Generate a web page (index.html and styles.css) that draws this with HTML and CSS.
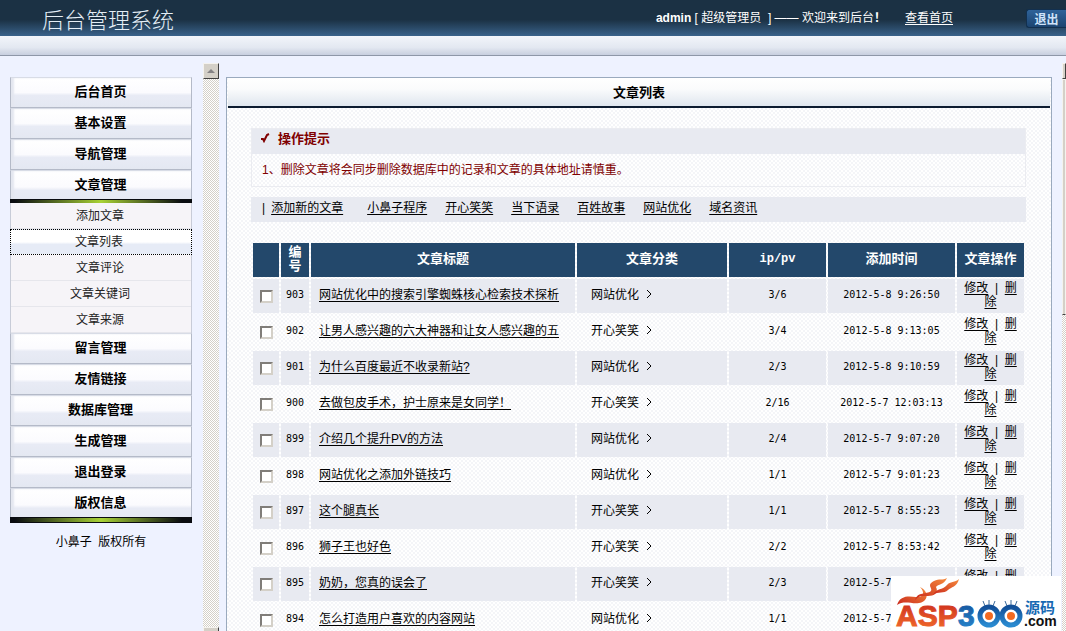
FILE: index.html
```html
<!DOCTYPE html>
<html lang="zh-CN">
<head>
    <meta charset="UTF-8">
    <meta name="viewport" content="width=device-width, initial-scale=1.0">
    <title>后台管理系统</title>
    <link rel="stylesheet" href="styles.css">
</head>
<body>
    <div class="header">
        <h1>后台管理系统</h1>
        <div class="welcome"><b>admin</b> [ 超级管理员 &nbsp;] —— 欢迎来到后台<b>！</b></div>
        <a class="home-link" href="#">查看首页</a>
        <button class="logout-btn" type="button">退出</button>
    </div>
    <div class="subheader"></div>

    <div class="main">
        <div class="sidebar">
            <ul class="menu">
                <li><a href="#">后台首页</a></li>
                <li><a href="#">基本设置</a></li>
                <li><a href="#">导航管理</a></li>
                <li class="open"><a href="#">文章管理</a></li>
            </ul>
            <ul class="submenu">
                <li><a href="#">添加文章</a></li>
                <li><a class="current" href="#">文章列表</a></li>
                <li><a href="#">文章评论</a></li>
                <li><a href="#">文章关键词</a></li>
                <li><a href="#">文章来源</a></li>
            </ul>
            <ul class="menu">
                <li><a href="#">留言管理</a></li>
                <li><a href="#">友情链接</a></li>
                <li><a href="#">数据库管理</a></li>
                <li><a href="#">生成管理</a></li>
                <li><a href="#">退出登录</a></li>
                <li class="open last"><a href="#">版权信息</a></li>
            </ul>
            <p class="copyright">小鼻子 &nbsp;版权所有</p>
        </div>

        <div class="scrollbar">
            <div class="scroll-btn"><svg width="8" height="4" viewBox="0 0 8 4"><path d="M0 4L4 0L8 4Z" fill="#848284"/></svg></div>
            <div class="scroll-btn"></div>
        </div>

        <div class="content">
            <div class="panel">
                <h2>文章列表</h2>
                <div class="panel-body">
                    <div class="tips">
                        <h3><svg width="10" height="10" viewBox="0 0 10 10"><path d="M1 6H3L4 8L7 2L9 1" fill="none" stroke="#800000" stroke-width="2"/></svg>操作提示</h3>
                        <p>1、删除文章将会同步删除数据库中的记录和文章的具体地址请慎重。</p>
                    </div>
                    <div class="links">
                        <span>|</span>
                        <a class="add-link" href="#">添加新的文章</a>
                        <a href="#">小鼻子程序</a>
                        <a href="#">开心笑笑</a>
                        <a href="#">当下语录</a>
                        <a href="#">百姓故事</a>
                        <a href="#">网站优化</a>
                        <a href="#">域名资讯</a>
                    </div>
                    <table>
                        <thead>
                            <tr>
                                <th class="col-check"></th>
                                <th class="col-id">编号</th>
                                <th class="col-title">文章标题</th>
                                <th class="col-type">文章分类</th>
                                <th class="col-ip">ip/pv</th>
                                <th class="col-time">添加时间</th>
                                <th class="col-action">文章操作</th>
                            </tr>
                        </thead>
                        <tbody id="articles"></tbody>
                    </table>
                </div>
            </div>
        </div>

        <div class="scrollbar page-scroll">
            <div class="scroll-btn"></div>
            <div class="scroll-thumb"></div>
        </div>
    </div>

    <div class="watermark">
        <svg width="170" height="55" viewBox="0 0 170 55">
            <defs>
                <linearGradient id="fire" x1="0" y1="1" x2="1" y2="0">
                    <stop offset="0" stop-color="#c9281c"/>
                    <stop offset="1" stop-color="#f58a3c"/>
                </linearGradient>
                <linearGradient id="asp" x1="0" y1="0" x2="0" y2="1">
                    <stop offset="0" stop-color="#c9281c"/>
                    <stop offset="1" stop-color="#f4702c"/>
                </linearGradient>
                <linearGradient id="blue" x1="0" y1="0" x2="0" y2="1">
                    <stop offset="0" stop-color="#124f98"/>
                    <stop offset="1" stop-color="#2a8ad0"/>
                </linearGradient>
            </defs>
            <path d="M6 29C9 19 18 20 25 21C33 22 34 16 29 11C39 16 37 26 28 27C20 28 13 24 6 29Z" fill="url(#fire)"/>
            <path d="M24 24C27 15 35 19 40 15C42 12 35 9 43 5C48 2 52 5 56 2C53 9 47 8 45 11C48 17 43 20 37 20C32 20 28 19 24 24Z" fill="url(#fire)"/>
            <path d="M42 19C46 11 51 15 56 9C59 5 64 7 68 3C66 11 60 11 57 14C53 18 47 15 42 19Z" fill="url(#fire)"/>
            <text class="logo-asp" x="5" y="50">ASP</text>
            <text class="logo-num" x="67" y="50">3</text>
            <g fill="#fff" stroke="url(#blue)" stroke-width="5">
                <ellipse cx="98" cy="40" rx="9" ry="9"/>
                <ellipse cx="120" cy="40" rx="9" ry="9"/>
            </g>
            <g fill="#f26a21">
                <circle cx="98" cy="40" r="4"/>
                <circle cx="120" cy="40" r="4"/>
            </g>
            <path d="M94 30L92 25M98 29V24M102 30L104 25M116 30L114 25M120 29V24M124 30L126 25" stroke="#3a6a9c" stroke-width="1"/>
            <text class="logo-cn" x="134" y="37">源码</text>
            <text class="logo-com" x="133" y="50">.com</text>
        </svg>
    </div>

    <script src="script.js"></script>
</body>
</html>
```
FILE: styles.css
```css
* {
    box-sizing: border-box;
}

body {
    margin: 0;
    height: 100vh;
    display: flex;
    flex-direction: column;
    overflow: hidden;
    background-color: #eef2ff;
    font-family: "Liberation Sans", "Noto Sans CJK SC", sans-serif;
    font-size: 12px;
    line-height: 14px;
    color: #000;
}

h1, h2, h3, p, ul {
    margin: 0;
    padding: 0;
}

ul {
    list-style: none;
}

a {
    color: #000;
    text-underline-offset: 2px;
}

.header {
    flex: none;
    display: flex;
    align-items: center;
    height: 36px;
    padding-left: 42px;
    background: linear-gradient(#1b3144 0%, #1b3144 55%, #39628a 100%);
    color: #fff;
}

.header h1 {
    flex: 1;
    padding-top: 6px;
    font-size: 22px;
    line-height: 30px;
    font-weight: 300;
    color: #e4eef6;
}

.home-link {
    margin: 0 73px 0 19px;
    color: #fff;
}

.logout-btn {
    width: 40px;
    height: 19px;
    padding: 0;
    border: 1px solid #12304f;
    border-right: none;
    border-radius: 3px 0 0 3px;
    background: linear-gradient(#2f639a, #1c4470);
    color: #cfe3fa;
    font: bold 12px "Liberation Sans", "Noto Sans CJK SC", sans-serif;
}

.subheader {
    flex: none;
    height: 20px;
    background: linear-gradient(#f2f5fa, #e3e8f1 60%, #c8cfdf);
    border-bottom: 1px solid #8e97a8;
}

.main {
    flex: 1;
    min-height: 0;
    display: flex;
    padding-top: 7px;
}

.sidebar {
    flex: none;
    width: 203px;
    padding: 14px 11px 0 10px;
}

.menu li {
    height: 31px;
    border: 1px solid #b4bac8;
    border-top-color: #d8dce6;
    background: linear-gradient(#fff 0%, #fbfbfe 50%, #e8ebf5 60%, #e4e8f2 100%);
    box-shadow: inset 3px 0 2px #e4e7f0;
}

.menu a {
    display: block;
    line-height: 28px;
    padding-right: 1px;
    font-size: 13px;
    font-weight: bold;
    text-align: center;
    text-decoration: none;
}

.menu .open {
    height: 33px;
    border-bottom: none;
}

.open::after {
    content: "";
    display: block;
    height: 4px;
    margin: 0 -1px;
    border: 1px solid #0a0c10;
    background: linear-gradient(90deg, #0a0c10 2%, #a8d236 50%, #0a0c10 95%);
}

.submenu {
    border: 1px solid #c8ccd8;
    border-width: 0 1px;
    background-color: #f6f4f8;
}

.submenu li {
    height: 26px;
    border-bottom: 1px solid #e6e6ec;
}

.submenu a {
    display: block;
    padding-right: 2px;
    line-height: 26px;
    text-align: center;
    text-decoration: none;
    color: #222;
}

.submenu .current {
    margin: 0 -1px;
    padding-right: 4px;
    border: 1px dotted #000;
    background: linear-gradient(#fff 50%, #e6ebf6 60%);
    line-height: 24px;
}

.copyright {
    margin-top: 14px;
    text-align: center;
}

.scrollbar {
    flex: none;
    display: flex;
    flex-direction: column;
    justify-content: space-between;
    width: 16px;
    background: repeating-conic-gradient(#fff 0% 25%, #d4d0c8 0% 50%) 0 0 / 2px 2px;
}

.scroll-btn {
    display: flex;
    align-items: center;
    justify-content: center;
    height: 16px;
    border: 1px solid #f4f2ee;
    border-right-color: #404040;
    border-bottom-color: #404040;
    background-color: #d4d0c8;
}

.scrollbar:not(.page-scroll) .scroll-btn:last-child {
    margin-bottom: -12px;
}

.content {
    flex: 1;
    min-width: 0;
    padding: 14px 10px 0 7px;
}

.panel {
    min-height: 100%;
    padding: 0 1px;
    border: 1px solid #9aaabe;
    background: repeating-conic-gradient(#fff 0% 25%, #f4f5f8 0% 50%) 0 0 / 4px 4px;
}

.panel h2 {
    height: 30px;
    border-bottom: 2px solid #0c1c30;
    background: linear-gradient(#fff 0%, #fafbfc 40%, #dfe6ee 100%);
    font-size: 13px;
    line-height: 29px;
    text-align: center;
}

.panel-body {
    padding: 20px 24px 0 23px;
}

.tips {
    height: 59px;
    border: 1px solid #ebecf1;
    color: #800000;
}

.tips h3 {
    height: 25px;
    padding-left: 8px;
    background-color: #e8eaf1;
    font-size: 13px;
    line-height: 20px;
}

.tips svg {
    margin-right: 8px;
}

.tips p {
    padding-left: 10px;
    line-height: 32px;
}

.links {
    display: flex;
    align-items: center;
    gap: 18px;
    height: 25px;
    margin-top: 10px;
    padding: 0 11px 4px;
    background-color: #e8eaf1;
}

.links span {
    margin-right: -12px;
}

.links .add-link {
    margin-right: 6px;
}

table {
    width: 100%;
    margin-top: 19px;
    border-spacing: 2px;
    table-layout: fixed;
}

th, td {
    height: 34px;
    padding: 0 0 2px;
    text-align: center;
}

th {
    background-color: #23486b;
    color: #fff;
    font-size: 13px;
}

tr:nth-child(odd) td {
    background-color: #e8eaf1;
}

.col-check {
    width: 26px;
}

.col-id {
    width: 28px;
    padding: 0 6px 2px;
}

.col-type {
    width: 150px;
}

.col-ip {
    width: 97px;
    font-family: "Liberation Mono", monospace;
    font-size: 12px;
}

.col-time {
    width: 127px;
}

.col-action {
    width: 67px;
}

td input {
    display: block;
    appearance: none;
    width: 13px;
    height: 13px;
    margin: 3px 0 0 7px;
    border: 2px inset #d4d0c8;
    background-color: #fff;
}

td.title {
    padding-left: 8px;
    text-align: left;
}

td.type {
    padding-left: 14px;
    text-align: left;
}

.type svg {
    margin-left: 7px;
}

.num {
    font-family: "DejaVu Sans Mono", monospace;
    font-size: 10px;
}

td.action {
    padding: 0 6px 2px;
}

.page-scroll {
    width: 4px;
    justify-content: flex-start;
    overflow: hidden;
}

.scroll-thumb {
    height: 236px;
    border: 1px solid #f4f2ee;
    border-bottom-color: #404040;
    background-color: #d4d0c8;
}

.watermark {
    position: absolute;
    right: 5px;
    bottom: 0;
    height: 55px;
    background-color: #fff;
}

.logo-asp, .logo-num {
    font: bold 30px "Liberation Sans", sans-serif;
    fill: url(#asp);
    stroke: url(#asp);
    stroke-width: 1px;
}

.logo-num {
    fill: url(#blue);
    stroke: url(#blue);
}

.logo-cn {
    font: bold 15px "Noto Sans CJK SC", sans-serif;
    fill: #1769b3;
}

.logo-com {
    font: bold 14px "Liberation Sans", sans-serif;
    fill: #111;
}
```
FILE: script.js
```js
const articles = [
    [903, '网站优化中的搜索引擎蜘蛛核心检索技术探析', '网站优化', '3/6', '2012-5-8 9:26:50'],
    [902, '让男人感兴趣的六大神器和让女人感兴趣的五', '开心笑笑', '3/4', '2012-5-8 9:13:05'],
    [901, '为什么百度最近不收录新站?', '网站优化', '2/3', '2012-5-8 9:10:59'],
    [900, '去做包皮手术，护士原来是女同学！', '开心笑笑', '2/16', '2012-5-7 12:03:13'],
    [899, '介绍几个提升PV的方法', '网站优化', '2/4', '2012-5-7 9:07:20'],
    [898, '网站优化之添加外链技巧', '网站优化', '1/1', '2012-5-7 9:01:23'],
    [897, '这个腿真长', '开心笑笑', '1/1', '2012-5-7 8:55:23'],
    [896, '狮子王也好色', '开心笑笑', '2/2', '2012-5-7 8:53:42'],
    [895, '奶奶，您真的误会了', '开心笑笑', '2/3', '2012-5-7'],
    [894, '怎么打造用户喜欢的内容网站', '网站优化', '1/1', '2012-5-7']
];

const arrow = '<svg width="6" height="10" viewBox="0 0 6 10"><path d="M1 1L5 5L1 9" fill="none" stroke="#000"/></svg>';

// dates without a time keep the width of a full timestamp
const padTime = time => time.padEnd(16, '\u00a0');

document.getElementById('articles').innerHTML = articles.map(([id, title, type, ip, time]) => `
    <tr>
        <td><input type="checkbox" aria-label="${id}"></td>
        <td class="num">${id}</td>
        <td class="title"><a href="#">${title}</a></td>
        <td class="type">${type}${arrow}</td>
        <td class="num">${ip}</td>
        <td class="num">${padTime(time)}</td>
        <td class="action"><a href="#">修改</a> &nbsp;|&nbsp; <a href="#">删除</a></td>
    </tr>
`).join('');
```
